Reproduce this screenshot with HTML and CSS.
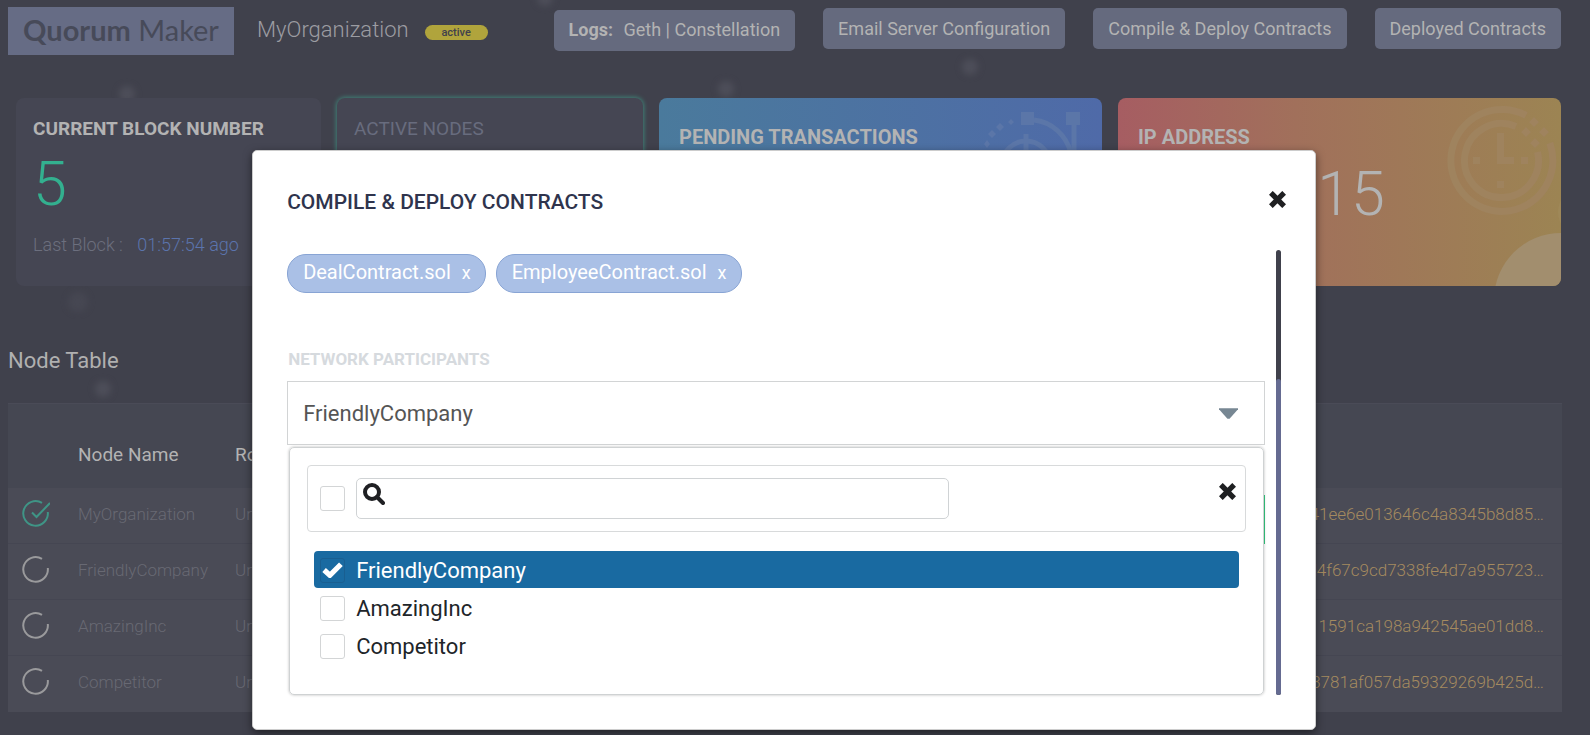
FILE: index.html
```html
<!DOCTYPE html>
<html lang="en">
<head>
<meta charset="utf-8">
<title>Quorum Maker</title>
<link rel="stylesheet" href="styles.css">
</head>
<body>
<div class="page">
  <span class="dot dot-a"></span><span class="dot dot-b"></span><span class="dot dot-c"></span><span class="dot dot-d"></span><span class="dot dot-e"></span><span class="dot dot-f"></span>
  <header class="topbar">
    <div class="logo"><b>Quorum</b> Maker</div>
    <h1 class="org">MyOrganization</h1>
    <span class="badge">active</span>
    <nav class="actions">
      <div class="action logs"><b>Logs:</b> <a href="#geth">Geth</a> | <a href="#constellation">Constellation</a></div>
      <button class="action" type="button">Email Server Configuration</button>
      <button class="action" type="button">Compile &amp; Deploy Contracts</button>
      <button class="action" type="button">Deployed Contracts</button>
    </nav>
  </header>

  <section class="cards">
    <article class="card card-block">
      <h2 class="card-title">CURRENT BLOCK NUMBER</h2>
      <p class="card-number">5</p>
      <p class="card-note">Last Block : <a href="#block">01:57:54 ago</a></p>
    </article>
    <article class="card card-nodes">
      <h2 class="card-title">ACTIVE NODES</h2>
    </article>
    <article class="card card-wide card-pending">
      <h2 class="card-title">PENDING TRANSACTIONS</h2>
      <svg class="card-art" viewBox="0 0 112 112" aria-hidden="true">
        <g fill="none" stroke="currentColor" stroke-width="5">
          <path d="M48 15C66 17 80 30 85 48"/>
          <circle cx="40" cy="60" r="24"/>
          <path d="M40 29v18M88 20v50"/>
        </g>
        <path fill="currentColor" d="M35 7h13v13H35zM80 7h14v13H80zM25 14l3 3-3 3-3-3zM14 18l4 4-4 4-4-4zM6 25l4 4-4 4-4-4zM1 35l3 4-3 4-3-4z"/>
      </svg>
    </article>
    <article class="card card-wide card-ip">
      <h2 class="card-title">IP ADDRESS</h2>
      <p class="card-number">10.0.2.15</p>
      <svg class="card-art" viewBox="0 0 112 112" aria-hidden="true">
        <g fill="none" stroke="currentColor" stroke-width="7">
          <path d="M81 10.500A51 51 0 1 0 104.800 38"/>
          <path d="M71 21.500A37 37 0 1 0 92.500 47"/>
        </g>
        <path fill="currentColor" d="M52 28h7v24h10v7H52zM28 52h7v7h-7zM76 52h7v7h-7zM52 76h7v7h-7zM89 12l5 5-5 5-5-5zM99 22l5 5-5 5-5-5zM81 22l5 5-5 5-5-5zM90 33l5 5-5 5-5-5z"/>
      </svg>
      <span class="bubble bubble-large"></span>
      <span class="bubble bubble-small"></span>
    </article>
  </section>

  <h2 class="table-title">Node Table</h2>
  <table class="nodes">
    <thead>
      <tr><th class="col-icon"></th><th class="col-name">Node Name</th><th class="col-role">Role</th><th class="col-enode"></th></tr>
    </thead>
    <tbody>
      <tr>
        <td><svg class="state state-on" viewBox="0 0 28 28" aria-hidden="true"><path d="M20 2.900A12.300 12.300 0 1 0 25.800 12M10 12.500l4.500 4.500L28 3"/></svg></td>
        <td>MyOrganization</td><td>Unassigned</td><td class="enode">41ee6e013646c4a8345b8d85…</td>
      </tr>
      <tr>
        <td><svg class="state" viewBox="0 0 28 28" aria-hidden="true"><path d="M20 2.900A12.300 12.300 0 1 0 25.800 12"/></svg></td>
        <td>FriendlyCompany</td><td>Unassigned</td><td class="enode">d4f67c9cd7338fe4d7a955723…</td>
      </tr>
      <tr>
        <td><svg class="state" viewBox="0 0 28 28" aria-hidden="true"><path d="M20 2.900A12.300 12.300 0 1 0 25.800 12"/></svg></td>
        <td>AmazingInc</td><td>Unassigned</td><td class="enode">1591ca198a942545ae01dd8…</td>
      </tr>
      <tr>
        <td><svg class="state" viewBox="0 0 28 28" aria-hidden="true"><path d="M20 2.900A12.300 12.300 0 1 0 25.800 12"/></svg></td>
        <td>Competitor</td><td>Unassigned</td><td class="enode">3781af057da59329269b425d…</td>
      </tr>
    </tbody>
  </table>
</div>

<div class="overlay">
  <section class="modal" role="dialog" aria-labelledby="modal-title">
    <header class="modal-head">
      <h2 id="modal-title">COMPILE &amp; DEPLOY CONTRACTS</h2>
      <button class="icon-button" type="button" aria-label="Close"><svg class="cross" viewBox="0 0 16 16"><path d="M3.500 3.500l9 9M12.500 3.500l-9 9"/></svg></button>
    </header>
    <div class="modal-body">
      <div class="form">
        <div class="chips">
          <span class="chip">DealContract.sol <button type="button" aria-label="Remove DealContract.sol">x</button></span>
          <span class="chip">EmployeeContract.sol <button type="button" aria-label="Remove EmployeeContract.sol">x</button></span>
        </div>
        <label class="field-label" for="participants">NETWORK PARTICIPANTS</label>
        <div class="select">
          <select id="participants"><option>FriendlyCompany</option></select>
          <svg class="caret" viewBox="0 0 18 10" aria-hidden="true"><path d="M0 0h18v1L10 10H8L0 1z"/></svg>
        </div>
        <div class="dropdown">
          <div class="filter">
            <input class="box" type="checkbox" aria-label="Select all">
            <div class="search">
              <svg class="search-icon" viewBox="0 0 22 22" aria-hidden="true"><circle cx="9" cy="9" r="7"/><path d="M14 14l6 6"/></svg>
              <input type="text" aria-label="Filter participants">
            </div>
            <button class="icon-button filter-close" type="button" aria-label="Close list"><svg class="cross" viewBox="0 0 16 16"><path d="M3.500 3.500l9 9M12.500 3.500l-9 9"/></svg></button>
          </div>
          <div class="options">
            <label class="option option-on">
              <span class="tick"><input class="box" type="checkbox" checked><svg viewBox="0 0 20 16" aria-hidden="true"><path d="M2 8.500l5.500 5L18 3"/></svg></span>
              FriendlyCompany
            </label>
            <label class="option"><input class="box" type="checkbox">AmazingInc</label>
            <label class="option"><input class="box" type="checkbox">Competitor</label>
          </div>
        </div>
      </div>
      <div class="track"><div class="thumb"></div></div>
    </div>
  </section>
</div>
</body>
</html>
```

FILE: styles.css
```css
* { box-sizing: border-box; }
body {
  margin: 0;
  min-height: 100vh;
  overflow: hidden;
  background: #40414c;
  color: #b3b3b3;
  font-family: Roboto, "Liberation Sans", sans-serif;
}
h1, h2, p { margin: 0; font-weight: 400; }
button { font: inherit; border: 0; padding: 0; background: none; color: inherit; }
a { color: inherit; text-decoration: none; }

.page { padding: 7px 28px 0 8px; }

/* faint blurred specks behind the page */
.dot {
  position: absolute;
  z-index: -1;
  width: 16px;
  height: 16px;
  border-radius: 50%;
  background: #4d4e59;
  filter: blur(3px);
}
.dot-a { left: 119px; top: 86px; }
.dot-b { left: 718px; top: 81px; }
.dot-c { left: 962px; top: 59px; }
.dot-d { left: 95px; top: 381px; }
.dot-e { left: 537px; top: -10px; }
.dot-f { left: 68px; top: 292px; width: 20px; height: 20px; background: #464752; }

.topbar { display: flex; align-items: flex-start; }
.logo {
  width: 226px;
  padding: 7px 0 9px;
  background: #666c85;
  color: #474a59;
  font: 29px/32px Lato, sans-serif;
  text-align: center;
  white-space: nowrap;
}
.logo b { font-weight: 700; }
.org { margin-left: 23px; font-size: 22px; line-height: 46px; font-weight: 300; color: #9c9ca2; }
.badge {
  margin: 18px 0 0 16px;
  width: 63px;
  border-radius: 8px;
  background: #b0a43c;
  color: #40414c;
  font-size: 11px;
  line-height: 15px;
  font-weight: 500;
  text-align: center;
}
.actions { display: flex; gap: 28px; margin: 1px 1px 0 auto; }
.action {
  height: 41px;
  padding: 0 15px;
  border-radius: 5px;
  background: #656a7e;
  color: #b3b3b3;
  font-size: 18px;
  line-height: 39px;
  white-space: nowrap;
}
.logs { margin-top: 2px; }
.logs b { margin-right: 6px; }

.cards {
  display: grid;
  grid-template-columns: 305fr 306fr 443fr 443fr;
  gap: 16px;
  padding: 0 1px 0 8px;
  margin-top: 43px;
}
.card {
  position: relative;
  height: 188px;
  padding: 20px 17px;
  border-radius: 8px;
  background: #454653;
  overflow: hidden;
}
.card-title { font-size: 19px; line-height: 22px; font-weight: 700; }
.card-number { font-size: 61px; line-height: 62px; font-weight: 300; }
.card-block .card-number { margin-top: 13px; color: #33b08f; }
.card-note { margin-top: 19px; font-size: 18px; line-height: 22px; font-weight: 300; color: #6c6f7e; }
.card-note a { margin-left: 10px; color: #5b74ad; }
.card-nodes { box-shadow: 0 0 4px 1px #3f8277; }
.card-nodes .card-title { font-weight: 400; color: #686c7e; }
.card-wide { padding: 27px 20px; }
.card-wide .card-title { font-size: 20px; line-height: 24px; }
.card-wide .card-number { margin-top: 14px; }
.card-pending { background: linear-gradient(90deg, #4a7a9c, #4f6aa8); }
.card-ip { background: linear-gradient(90deg, #a65d62, #a1705b 40%, #9c8453); }
.card-art { position: absolute; top: 7px; right: 4px; width: 112px; height: 112px; overflow: visible; color: #9f835e; }
.card-pending .card-art { color: #5b76a8; }
.bubble { position: absolute; border-radius: 50%; background: #a28e6e; }
.bubble-large { width: 134px; height: 134px; right: -67px; top: 135px; }
.bubble-small { width: 50px; height: 50px; right: -47px; top: 89px; background: #9f8859; }

.table-title { margin-top: 61px; font-size: 22px; line-height: 28px; color: #b0b0b0; }
.nodes { width: 100%; margin-top: 28px; border-collapse: collapse; table-layout: fixed; background: #4a4b56; }
.nodes thead { background: #454752; border-top: 1px solid #4a4b57; }
.nodes th { height: 84px; padding: 17px 0 0; font-size: 19px; font-weight: 400; text-align: left; }
.nodes td { height: 56px; padding: 0 0 3px; font-size: 17px; font-weight: 300; color: #686973; }
.nodes tbody tr + tr { border-top: 1px solid #454652; }
.col-icon { width: 70px; }
.col-name { width: 157px; }
.col-role { width: 500px; }
.nodes .enode { padding-right: 18px; text-align: right; color: #a58a5f; }
.state { display: block; width: 28px; height: 28px; margin-left: 14px; fill: none; stroke: #9a9a9c; stroke-width: 2; }
.state-on { stroke: #3f9586; }

.overlay { position: absolute; inset: 0; padding: 150px 22px 0 0; }
.modal {
  width: 66.9vw;
  margin: 0 auto;
  padding: 30px 34px 34px;
  border: 1px solid #ccc;
  border-radius: 5px;
  background: #fff;
  box-shadow: 0 3px 9px rgba(0, 0, 0, .5);
  color: #212529;
}
.modal-head { display: flex; justify-content: space-between; align-items: flex-start; height: 69px; }
.modal-head h2 { font-size: 21px; line-height: 42px; font-weight: 500; color: #2f344d; }
.icon-button { display: block; margin: 10px -5px 0 0; }
.cross { display: block; width: 17px; height: 17px; fill: none; stroke: #1f2022; stroke-width: 5; stroke-linecap: square; }
.modal-body { display: flex; gap: 11px; }
.form { flex: 1; display: flex; flex-direction: column; }
.chips { display: flex; gap: 10px; padding-top: 4px; }
.chip {
  padding: 0 14px 2px 15px;
  border: 1px solid #88a4d4;
  border-radius: 19px;
  background: #aac0e6;
  color: #fff;
  font-size: 20px;
  line-height: 34px;
}
.chip button { margin-left: 6px; font-size: 18px; }
.field-label { margin: 56px 0 12px 1px; font-size: 17px; line-height: 20px; font-weight: 700; color: #d6dade; }
.select { position: relative; }
.select select {
  display: block;
  width: 100%;
  height: 64px;
  padding: 0 15px;
  border: 1px solid #d2d4d5;
  border-radius: 0;
  background: #fff;
  color: #555;
  font: 22px Roboto, sans-serif;
  appearance: none;
}
.caret { position: absolute; right: 27px; top: 27px; width: 19px; height: 11px; fill: #778793; }
.dropdown {
  position: relative;
  margin: 2px 1px 0 2px;
  padding: 17px 17px 30px;
  border: 1px solid #cfd2d3;
  border-radius: 5px;
  box-shadow: 0 0 3px #bbb;
}
/* edge of the confirm button that the list covers */
.dropdown::after { content: ""; position: absolute; right: -2px; top: 47px; width: 1px; height: 49px; background: #2fb673; }
.filter { display: flex; align-items: center; height: 67px; padding: 0 12px; border: 1px solid #d8dadb; border-radius: 4px; }
.box { flex: none; width: 25px; height: 25px; margin: 0 11px 0 0; border: 1px solid #d3d5d6; border-radius: 3px; background: #fff; appearance: none; }
.search { display: flex; align-items: flex-start; width: 65%; height: 41px; padding: 4px 6px; border: 1px solid #d0d3d5; border-radius: 5px; }
.search input { flex: 1; min-width: 0; height: 28px; border: 0; outline: 0; font-size: 20px; }
.search-icon { width: 22px; height: 22px; fill: none; stroke: #1f2023; stroke-width: 4; stroke-linecap: round; }
.filter-close { align-self: flex-start; margin: 17px -3px 0 auto; }
.options { display: flex; flex-direction: column; gap: 1px; padding: 19px 7px 0; }
.option { display: flex; align-items: center; height: 37px; padding: 2px 6px 0; border-radius: 4px; font-size: 22px; line-height: 26px; }
.option-on { background: #196aa1; color: #fff; }
.option-on .box { border-color: #195f91; background: transparent; }
.tick { display: grid; align-items: center; justify-items: start; }
.tick > * { grid-area: 1 / 1; }
.tick svg { width: 21px; height: 17px; margin: 0 0 3px 2px; fill: none; stroke: #fff; stroke-width: 5; pointer-events: none; }
.track { width: 5px; border-radius: 3px; background: #40414c; display: flex; align-items: flex-end; }
.thumb { width: 5px; height: 71%; border-radius: 3px; background: #656b91; }
```
